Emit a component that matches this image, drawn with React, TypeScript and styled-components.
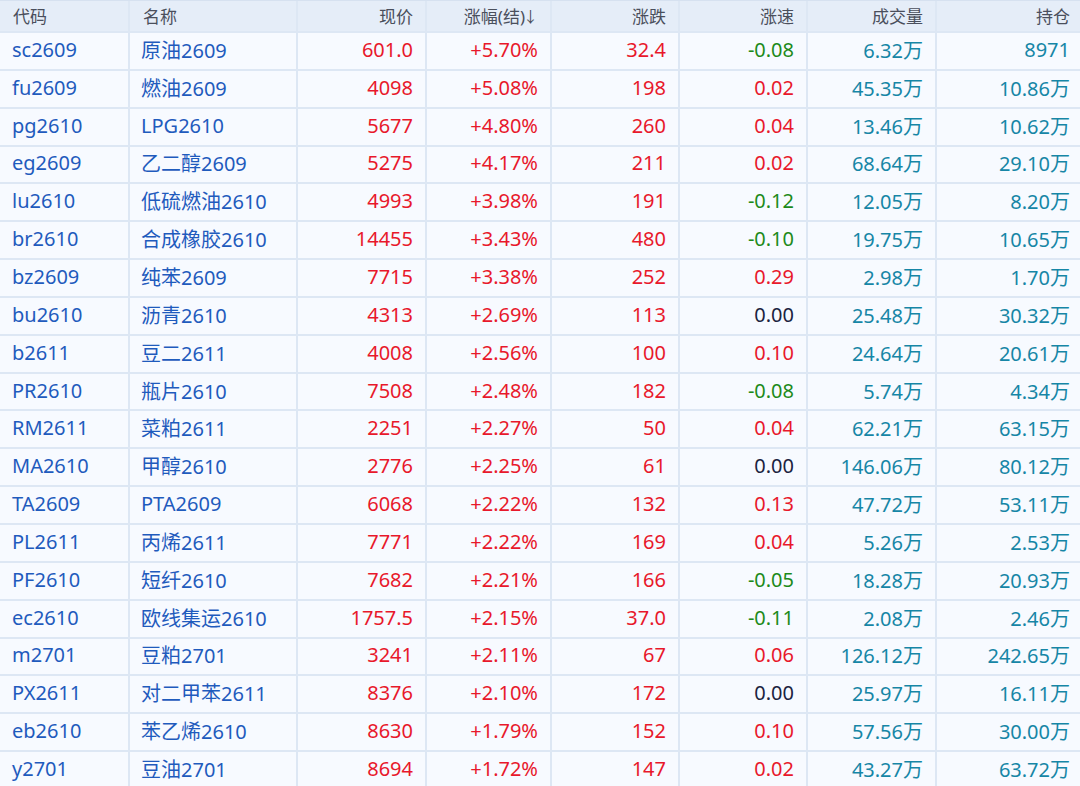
import React from 'react';
import styled, { createGlobalStyle } from 'styled-components';

type Quote = {
  code: string;
  name: string;
  price: string;
  pct: string;
  change: string;
  speed: string;
  volume: string;
  hold: string;
};

const rows: Quote[] = [
  { code: 'sc2609', name: '原油2609', price: '601.0', pct: '+5.70%', change: '32.4', speed: '-0.08', volume: '6.32万', hold: '8971' },
  { code: 'fu2609', name: '燃油2609', price: '4098', pct: '+5.08%', change: '198', speed: '0.02', volume: '45.35万', hold: '10.86万' },
  { code: 'pg2610', name: 'LPG2610', price: '5677', pct: '+4.80%', change: '260', speed: '0.04', volume: '13.46万', hold: '10.62万' },
  { code: 'eg2609', name: '乙二醇2609', price: '5275', pct: '+4.17%', change: '211', speed: '0.02', volume: '68.64万', hold: '29.10万' },
  { code: 'lu2610', name: '低硫燃油2610', price: '4993', pct: '+3.98%', change: '191', speed: '-0.12', volume: '12.05万', hold: '8.20万' },
  { code: 'br2610', name: '合成橡胶2610', price: '14455', pct: '+3.43%', change: '480', speed: '-0.10', volume: '19.75万', hold: '10.65万' },
  { code: 'bz2609', name: '纯苯2609', price: '7715', pct: '+3.38%', change: '252', speed: '0.29', volume: '2.98万', hold: '1.70万' },
  { code: 'bu2610', name: '沥青2610', price: '4313', pct: '+2.69%', change: '113', speed: '0.00', volume: '25.48万', hold: '30.32万' },
  { code: 'b2611', name: '豆二2611', price: '4008', pct: '+2.56%', change: '100', speed: '0.10', volume: '24.64万', hold: '20.61万' },
  { code: 'PR2610', name: '瓶片2610', price: '7508', pct: '+2.48%', change: '182', speed: '-0.08', volume: '5.74万', hold: '4.34万' },
  { code: 'RM2611', name: '菜粕2611', price: '2251', pct: '+2.27%', change: '50', speed: '0.04', volume: '62.21万', hold: '63.15万' },
  { code: 'MA2610', name: '甲醇2610', price: '2776', pct: '+2.25%', change: '61', speed: '0.00', volume: '146.06万', hold: '80.12万' },
  { code: 'TA2609', name: 'PTA2609', price: '6068', pct: '+2.22%', change: '132', speed: '0.13', volume: '47.72万', hold: '53.11万' },
  { code: 'PL2611', name: '丙烯2611', price: '7771', pct: '+2.22%', change: '169', speed: '0.04', volume: '5.26万', hold: '2.53万' },
  { code: 'PF2610', name: '短纤2610', price: '7682', pct: '+2.21%', change: '166', speed: '-0.05', volume: '18.28万', hold: '20.93万' },
  { code: 'ec2610', name: '欧线集运2610', price: '1757.5', pct: '+2.15%', change: '37.0', speed: '-0.11', volume: '2.08万', hold: '2.46万' },
  { code: 'm2701', name: '豆粕2701', price: '3241', pct: '+2.11%', change: '67', speed: '0.06', volume: '126.12万', hold: '242.65万' },
  { code: 'PX2611', name: '对二甲苯2611', price: '8376', pct: '+2.10%', change: '172', speed: '0.00', volume: '25.97万', hold: '16.11万' },
  { code: 'eb2610', name: '苯乙烯2610', price: '8630', pct: '+1.79%', change: '152', speed: '0.10', volume: '57.56万', hold: '30.00万' },
  { code: 'y2701', name: '豆油2701', price: '8694', pct: '+1.72%', change: '147', speed: '0.02', volume: '43.27万', hold: '63.72万' },
];

type Tone = 'link' | 'up' | 'down' | 'flat' | 'teal';

const toneColor: Record<Tone, string> = {
  link: '#1f5bbd',
  up: '#e8182b',
  down: '#1d8a1a',
  flat: '#1b2340',
  teal: '#1686a6',
};

const speedTone = (s: string): Tone =>
  s.startsWith('-') ? 'down' : Number(s) === 0 ? 'flat' : 'up';

const GlobalStyle = createGlobalStyle`
  html, body {
    margin: 0;
    padding: 0;
    background: #f7faff;
    overflow: hidden;
  }
  body {
    font-family: "Noto Sans", "Noto Sans CJK SC", sans-serif;
  }
`;

const Board = styled.div`
  width: 1080px;
  height: 786px;
  overflow: hidden;
  background: #f7faff;
  border-top: 1px solid #d6e1f0;
  box-sizing: border-box;
`;

const Grid = styled.div<{ $head?: boolean }>`
  display: grid;
  grid-template-columns: 130px 168px 129px 125px 128px 128px 129px 1fr;
  height: ${(p) => (p.$head ? '32px' : '37.85px')};
  box-sizing: border-box;
  border-bottom: 2px solid #dde7f4;
  background: ${(p) => (p.$head ? '#e5edf8' : '#f7faff')};
`;

const Cell = styled.div<{ $align?: 'left' | 'right'; $tone?: Tone; $head?: boolean }>`
  display: flex;
  align-items: center;
  justify-content: ${(p) => (p.$align === 'right' ? 'flex-end' : 'flex-start')};
  padding: ${(p) => (p.$head ? '0 12px 1px 13px' : '0 12px 3px 12px')};
  border-right: 2px solid #dde7f4;
  font-size: ${(p) => (p.$head ? '17px' : '20px')};
  color: ${(p) => (p.$head ? '#4a4f5c' : toneColor[p.$tone ?? 'flat'])};
  white-space: nowrap;
  overflow: hidden;
  &:last-child {
    border-right: none;
    padding-right: 10px;
  }
`;

const NameCell = styled(Cell)`
  padding-left: 11px;
`;

const Arrow = styled.span`
  margin-left: -2px;
  font-size: 15px;
`;

const headers: { label: string; align: 'left' | 'right'; sorted?: boolean }[] = [
  { label: '代码', align: 'left' },
  { label: '名称', align: 'left' },
  { label: '现价', align: 'right' },
  { label: '涨幅(结)', align: 'right', sorted: true },
  { label: '涨跌', align: 'right' },
  { label: '涨速', align: 'right' },
  { label: '成交量', align: 'right' },
  { label: '持仓', align: 'right' },
];

const App = () => {
  return (
    <>
      <GlobalStyle />
      <Board>
        <Grid $head>
          {headers.map((h) => (
            <Cell key={h.label} $head $align={h.align}>
              {h.label}
              {h.sorted && <Arrow>↓</Arrow>}
            </Cell>
          ))}
        </Grid>
        {rows.map((r) => (
          <Grid key={r.code}>
            <Cell $tone="link">{r.code}</Cell>
            <NameCell $tone="link">{r.name}</NameCell>
            <Cell $align="right" $tone="up">{r.price}</Cell>
            <Cell $align="right" $tone="up">{r.pct}</Cell>
            <Cell $align="right" $tone="up">{r.change}</Cell>
            <Cell $align="right" $tone={speedTone(r.speed)}>{r.speed}</Cell>
            <Cell $align="right" $tone="teal">{r.volume}</Cell>
            <Cell $align="right" $tone="teal">{r.hold}</Cell>
          </Grid>
        ))}
      </Board>
    </>
  );
};

export default App;
